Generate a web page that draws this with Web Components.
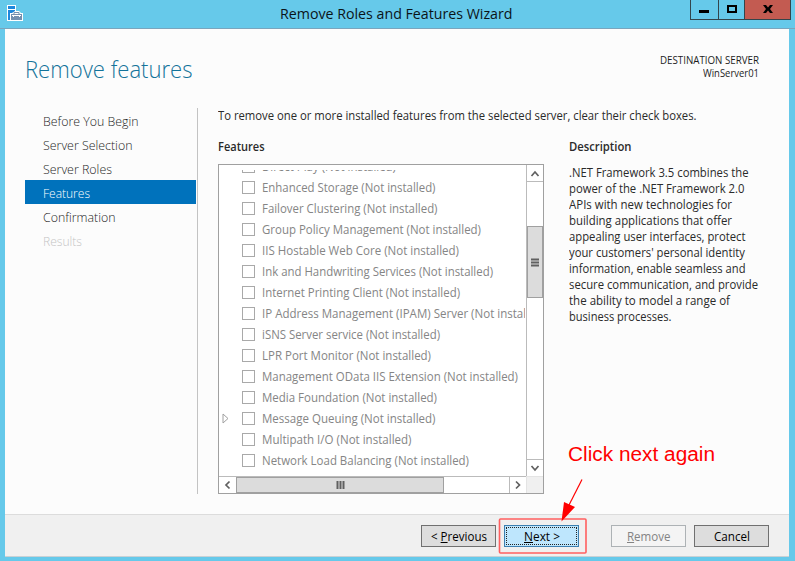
<!DOCTYPE html>
<html lang="en"><head><meta charset="utf-8"><title>Remove Roles and Features Wizard</title>
<style>
html,body{margin:0;width:795px;height:561px;overflow:hidden}
body{font:12px/16px "Open Sans","Noto Sans",sans-serif;color:#2a2a2a}
</style></head><body>
<wizard-window></wizard-window>
<script>
const define=(name,markup,init)=>customElements.define(name,class extends HTMLElement{
  connectedCallback(){
    if(this.shadowRoot)return;
    const t=document.createElement('template');
    t.innerHTML=typeof markup==='function'?markup(this):markup;
    this.attachShadow({mode:'open'}).append(t.content.cloneNode(true));
    if(init)init(this);
  }
});

/* A single line of text condensed or widened to an exact width. */
define('fit-text','<style>:host{display:block;white-space:nowrap}span{display:inline-block;white-space:pre;transform-origin:0 0}</style><span><slot></slot></span>',el=>{
  const s=el.shadowRoot.querySelector('span'),w=+el.getAttribute('w');
  const n=s.getBoundingClientRect().width;
  s.style.transform=`scaleX(${(w/n).toFixed(4)})`;
  s.style.marginRight=(w-n)+'px';
});

define('title-bar',`<style>
:host{display:flex;height:28px;background:#66c9ea;border-bottom:1px solid #7aa5bd;position:relative;box-sizing:content-box}
.icon{margin:5px 0 0 7px;flex:none;width:16px;height:16px}
.title{margin:2px 0 0 257px;font-size:15px;line-height:22px;color:#0b1418}
.btns{margin-left:auto;margin-right:4px;display:flex;height:20px;box-sizing:border-box;border:1px solid #33454c;border-top:0}
.btns svg{display:block}.btns>*+*{border-left:1px solid #33454c}.x{background:#c35b51}
</style>
<svg class="icon" viewBox="0 0 16 16"><path d="M0 0h9v6h3l2 2h2v8H0z" fill="#fff"/><path d="M1 1h7v3H1zM1 5h7v1L5 8H3v7H1z" fill="#1e87dc"/><path d="M4 9h11v6H4z" fill="#7590b0"/><path d="M7 9V7.500h5V9" fill="none" stroke="#7590b0"/><path d="M5 10.500h9" stroke="#fff"/><path d="M6.500 10v2M12.500 10v2" stroke="#fff"/></svg>
<fit-text class="title" w="232.500">Remove Roles and Features Wizard</fit-text>
<div class="btns"><svg width="27" height="19"><path d="M8 10h10v3H8z"/></svg><svg width="25" height="19"><path d="M9 6h8v6H9z" fill="none" stroke="#000" stroke-width="2"/></svg><svg class="x" width="45" height="19"><path d="M18 5h3l2 2.500L25 5h3l-3 4 3 4h-3l-2-2.500L21 13h-3l3-4z"/></svg></div>`);

define('step-item',`<style>
:host{display:block;height:24px;padding-left:18px;box-sizing:border-box;font-size:13px;line-height:26px;font-weight:300;color:#1e1e1e}
:host([active]){background:#0072bc;color:#fff}
:host([disabled]){color:#c4c4c4}
</style><slot></slot>`);

define('feature-row',`<style>
:host{display:flex;align-items:center;height:21px;color:#858585}
.exp{width:23px;height:21px;flex:none}
.box{width:11px;height:11px;border:1px solid #a9a9a9;background:#fff;margin-right:7px;flex:none}
path{display:none}:host([expandable]) path{display:block}
</style><svg class="exp"><path d="M4 6v9l5-4.500z" fill="#fff" stroke="#a0a0a0"/></svg><div class="box"></div><slot></slot>`);

const rows=[['Direct Play (Not installed)',134],['Enhanced Storage (Not installed)',173.5],['Failover Clustering (Not installed)',175.5],['Group Policy Management (Not installed)',219],['IIS Hostable Web Core (Not installed)',197],['Ink and Handwriting Services (Not installed)',231],['Internet Printing Client (Not installed)',198],['IP Address Management (IPAM) Server (Not installed)',284],['iSNS Server service (Not installed)',178],['LPR Port Monitor (Not installed)',169],['Management OData IIS Extension (Not installed)',256],['Media Foundation (Not installed)',175],['Message Queuing (Not installed)',173.5],['Multipath I/O (Not installed)',149.5],['Network Load Balancing (Not installed)',207]];

define('feature-list',`<style>
:host{display:grid;grid-template:311px 17px / 307px 17px;width:324px;height:328px;border:1px solid #a0a0a0;background:#fff}
.view{overflow:hidden;margin:5px 1px 0 0}
.rows{margin:-14px 0 0}
.v{display:flex;flex-direction:column;border-left:1px solid #bbb;box-sizing:border-box}
.h{display:flex;border-top:1px solid #bbb;box-sizing:border-box}
.b{width:16px;height:16px;flex:none;background:#fff;display:block;box-sizing:border-box}
.thumb{background:#dcdcdc;border:1px solid #a0a0a0;box-sizing:border-box;display:flex;align-items:center;justify-content:center}
.corner{background:#f0f0f0;border:solid #e4e4e4;border-width:1px 0 0 1px;box-sizing:border-box}
.b path{fill:none;stroke:#606060;stroke-width:1.700}
</style>
<div class="view"><div class="rows">${rows.map(([t,w])=>`<feature-row ${t[2]==='s'&&t[0]==='M'?'expandable':''}><fit-text w="${w}">${t}</fit-text></feature-row>`).join('')}</div></div>
<div class="v"><svg class="b" style="border-bottom:1px solid #bbb;height:17px"><path d="M4.500 11L8 7l3.500 4"/></svg><div class="thumb" style="margin-top:44px;height:72px"><svg width="8" height="9"><path d="M0 1.500h8M0 4.500h8M0 7.500h8" stroke="#606060" stroke-width="2"/></svg></div><svg class="b" style="border-top:1px solid #bbb;margin-top:auto;height:17px"><path d="M4.500 6L8 10l3.500-4"/></svg></div>
<div class="h"><svg class="b" style="width:17px"><path d="M10.500 4.500L7 8l3.500 3.500"/></svg><div class="thumb" style="width:208px"><svg width="9" height="8"><path d="M1.500 0v8M4.500 0v8M7.500 0v8" stroke="#606060" stroke-width="2"/></svg></div><svg class="b" style="border-left:1px solid #bbb;margin-left:auto;width:17px"><path d="M6 4.500L9.500 8 6 11.500"/></svg></div>
<div class="corner"></div>`);

define('push-button',`<style>
:host{display:flex;width:75px;height:22px;box-sizing:border-box;border:1px solid #707070;background:#ddd;color:#000;justify-content:center;padding-top:3px}
:host([focused]){border-color:#3c7fb1;background:#bee6fd;outline:1px dotted #222;outline-offset:-3px}
:host([disabled]){border-color:#adb2b5;background:#f4f4f4;color:#838383}
</style><slot></slot>`);

define('click-note',`<style>
:host{position:absolute;left:0;top:0;width:795px;height:561px;pointer-events:none;color:red;font-family:"Liberation Sans",Arial,sans-serif;font-size:20px;line-height:24px}
fit-text{position:absolute;left:568px;top:442px}
svg{position:absolute;left:0;top:0}
</style><fit-text w="147">Click next again</fit-text>
<svg width="795" height="561"><rect x="499.500" y="519" width="86.500" height="34" rx="1" fill="none" stroke="#ff5f5f" stroke-width="1.600"/><path d="M582 479.500L568 507" stroke="red" stroke-width="1.200"/><path d="M561.500 521.500L564 502l11 5z" fill="red"/></svg>`);

const desc=[['.NET Framework 3.5 combines the',179.5],['power of the .NET Framework 2.0',175.5],['APIs with new technologies for',163],['building applications that offer',163],['appealing user interfaces, protect',176.5],["your customers' personal identity",176],['information, enable seamless and',176.5],['secure communication, and provide',189],['the ability to model a range of',161],['business processes.',102.5]];

define('wizard-window',`<style>
:host{display:flex;flex-direction:column;position:relative;width:795px;height:561px;background:#66c9ea}
.body{margin:0 6px 0 5px;height:485px;background:#fcfcfc;display:flex;flex-direction:column}
.head{display:flex;justify-content:space-between;height:79px;padding:0 30px 0 20px}
h1{margin:23px 0 0;font-size:24px;line-height:34px;font-weight:300;color:#13739a}
.dest{margin-top:25px;font-size:10.500px;line-height:13px;color:#1c1c1c;display:flex;flex-direction:column;align-items:flex-end}
.main{display:flex;padding-left:20px}
.steps{width:171px;margin-right:1px}
.content{border-left:1px solid #c3c3c3;height:386px;padding-left:20px}
.cols{display:flex;gap:25px;margin-top:15px}
h2{margin:0 0 9px;font-size:12px;line-height:16px;font-weight:600}
.footer{margin:0 6px 0 5px;height:43px;box-sizing:border-box;background:#f0f0f0;border-top:1px solid #dcdcdc;border-bottom:1px solid #c8d1d5;display:flex;justify-content:flex-end;padding:10px 20px 0 0}
</style>
<title-bar></title-bar>
<div class="body">
<div class="head"><h1><fit-text w="167.500">Remove features</fit-text></h1><div class="dest"><fit-text w="99">DESTINATION SERVER</fit-text><fit-text w="56">WinServer01</fit-text></div></div>
<div class="main"><div class="steps">
<step-item><fit-text w="95.500">Before You Begin</fit-text></step-item><step-item><fit-text w="89.500">Server Selection</fit-text></step-item><step-item><fit-text w="69">Server Roles</fit-text></step-item><step-item active><fit-text w="47">Features</fit-text></step-item><step-item><fit-text w="72.500">Confirmation</fit-text></step-item><step-item disabled><fit-text w="39">Results</fit-text></step-item></div>
<div class="content"><fit-text w="478.500">To remove one or more installed features from the selected server, clear their check boxes.</fit-text>
<div class="cols"><div><h2><fit-text w="46.500">Features</fit-text></h2><feature-list></feature-list></div><div><h2 style="margin-bottom:10px"><fit-text w="62.500">Description</fit-text></h2>${desc.map(([t,w])=>`<fit-text w="${w}">${t}</fit-text>`).join('')}</div></div></div></div>
</div>
<div class="footer"><push-button><fit-text w="56">&lt; <u>P</u>revious</fit-text></push-button><push-button focused style="margin-left:8px"><fit-text w="36"><u>N</u>ext &gt;</fit-text></push-button><push-button disabled style="margin-left:32px"><fit-text w="43.500"><u>R</u>emove</fit-text></push-button><push-button style="margin-left:8px"><fit-text w="36">Cancel</fit-text></push-button></div>
<click-note></click-note>`);
</script></body></html>
